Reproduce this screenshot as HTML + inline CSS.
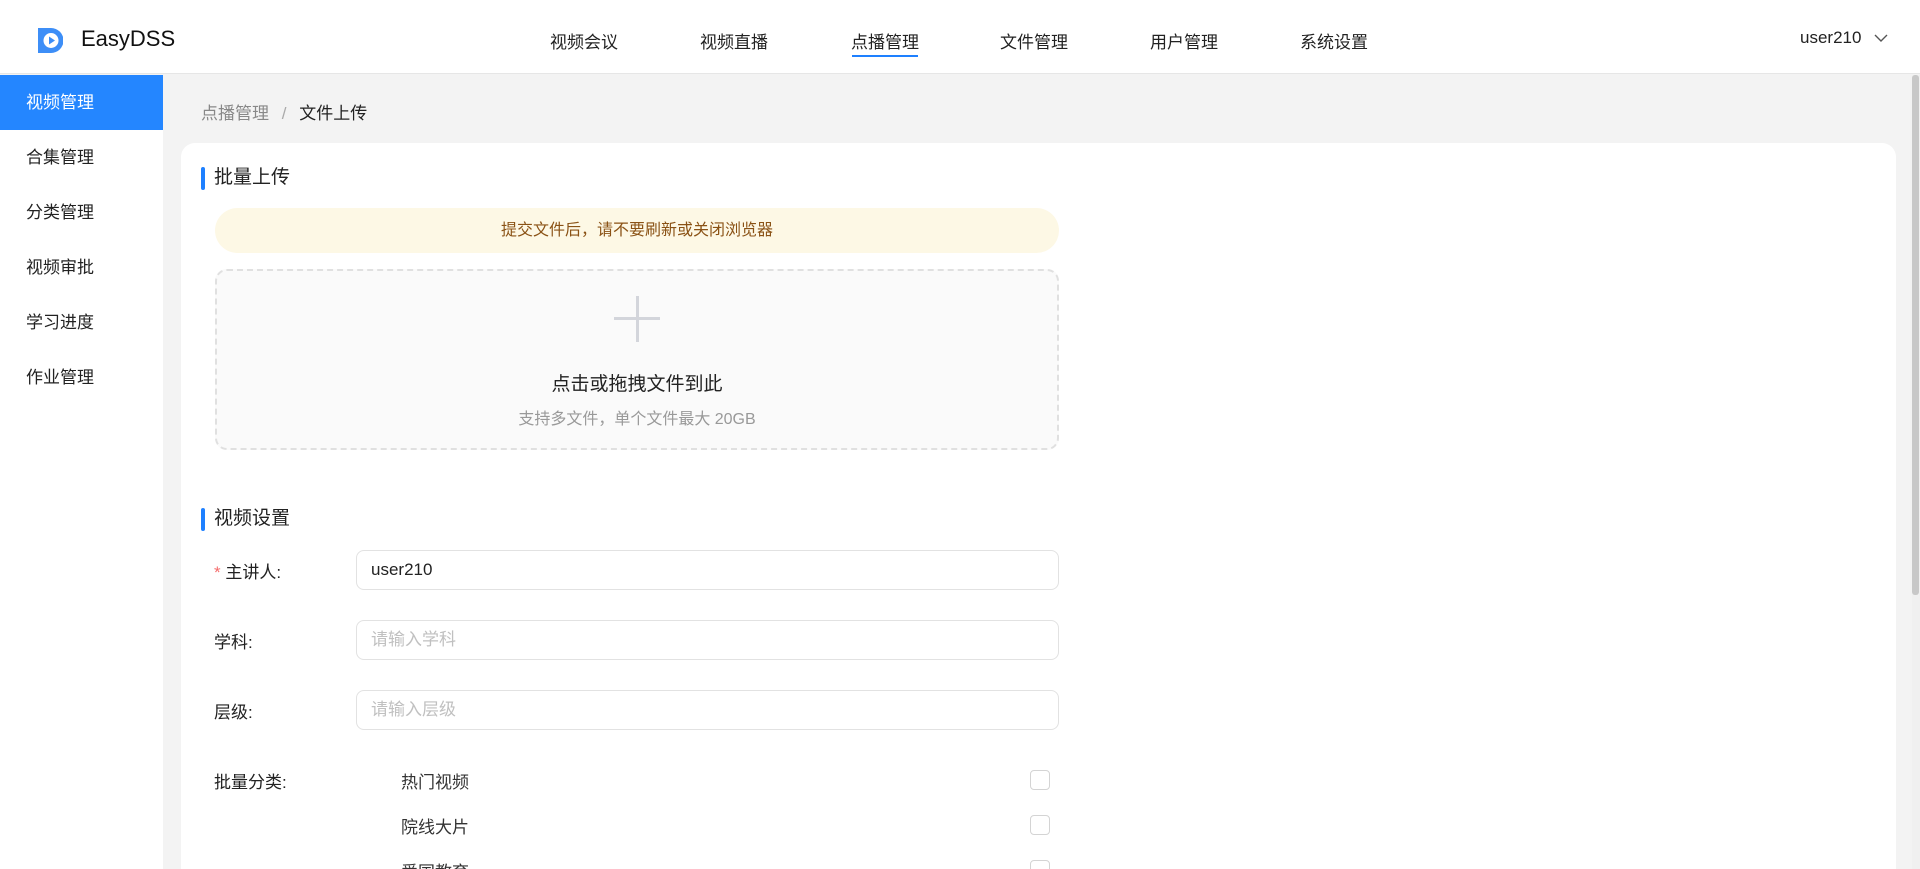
<!DOCTYPE html>
<html><head><meta charset="utf-8"><style>
*{margin:0;padding:0;box-sizing:border-box}
html{width:1920px;height:869px;overflow:hidden}
body{width:1920px;height:869px;overflow:hidden;background:#f3f3f3;font-family:"Liberation Sans","Noto Sans CJK SC",sans-serif;color:#222;position:relative}
.abs{position:absolute}
header{position:absolute;left:0;top:0;width:1920px;height:74px;background:#fff;border-bottom:1px solid #e6e6e6}
.nav{position:absolute;top:28px;font-size:17px;color:#222;white-space:nowrap}
.side{position:absolute;left:0;top:75px;width:163px;height:794px;background:#fff}
.si{position:absolute;left:0;width:163px;height:55px;line-height:55px;padding-left:26px;font-size:17px;color:#222}
.card{position:absolute;left:181px;top:143px;width:1715px;height:726px;background:#fff;border-radius:14px 14px 0 0}
.ttl{position:absolute;font-size:19px;color:#222;padding-left:13px;line-height:24px}
.ttl:before{content:"";position:absolute;left:0;top:1px;width:4px;height:23px;background:#1e80ff;border-radius:2px}
.inp{position:absolute;left:356px;width:703px;height:40px;border:1px solid #e2e2e2;border-radius:8px;font-size:17px;line-height:38px;padding-left:14px}
.lbl{position:absolute;left:214px;font-size:17px;color:#222}
.cb{position:absolute;left:1030px;width:20px;height:20px;border:1px solid #d4d4d4;border-radius:4px;background:#fff}
.cat{position:absolute;left:401px;font-size:17px;color:#333}
</style></head><body>
<header>
<svg class="abs" style="left:38px;top:28px" width="25" height="25" viewBox="0 0 25 25"><path d="M0 0 H13 A12 12 0 0 1 13 25 H0Z" fill="#3d8ef7"/><circle cx="13" cy="12.5" r="7.5" fill="#fff"/><path d="M11 8.5 L17 12.5 L11 16.5Z" fill="#3d8ef7"/></svg>
<div class="abs" style="left:81px;top:26px;font-size:22px;color:#111">EasyDSS</div>
<div class="nav" style="left:550px">视频会议</div>
<div class="nav" style="left:700px">视频直播</div>
<div class="nav" style="left:851px">点播管理</div>
<div class="abs" style="left:852px;top:55px;width:66px;height:2px;background:#1e80ff"></div>
<div class="nav" style="left:1000px">文件管理</div>
<div class="nav" style="left:1150px">用户管理</div>
<div class="nav" style="left:1300px">系统设置</div>
<div class="nav" style="left:1800px;color:#222">user210</div>
<svg class="abs" style="left:1874px;top:34px" width="14" height="9" viewBox="0 0 14 9"><path d="M1 1 L7 7 L13 1" fill="none" stroke="#555" stroke-width="1.4"/></svg>
</header>
<div class="side">
<div class="si" style="top:0;background:#2486ff;color:#fff">视频管理</div>
<div class="si" style="top:55px">合集管理</div>
<div class="si" style="top:110px">分类管理</div>
<div class="si" style="top:165px">视频审批</div>
<div class="si" style="top:220px">学习进度</div>
<div class="si" style="top:275px">作业管理</div>
</div>
<div class="abs" style="left:1912px;top:75px;width:8px;height:794px;background:#f0f0f0"><div style="width:7px;height:520px;background:#c8c8c8;border-radius:3px"></div></div>
<div class="abs" style="left:201px;top:99px;font-size:17px;color:#888">点播管理 <span style="color:#aaa;margin:0 8px">/</span> <span style="color:#222">文件上传</span></div>
<div class="card"></div>
<div class="ttl" style="left:201px;top:166px">批量上传</div>
<div class="abs" style="left:215px;top:208px;width:844px;height:45px;border-radius:23px;background:#fdf8e5;color:#8a5215;font-size:16px;text-align:center;line-height:45px">提交文件后，请不要刷新或关闭浏览器</div>
<div class="abs" style="left:215px;top:269px;width:844px;height:181px;border:2px dashed #e0e0e0;border-radius:12px;background:#fafafa"></div>
<div class="abs" style="left:614px;top:317px;width:46px;height:2.5px;background:#d3d5db"></div>
<div class="abs" style="left:636px;top:296px;width:2.5px;height:46px;background:#d3d5db"></div>
<div class="abs" style="left:215px;top:369px;width:844px;text-align:center;font-size:19px;color:#222">点击或拖拽文件到此</div>
<div class="abs" style="left:215px;top:405px;width:844px;text-align:center;font-size:16px;color:#999">支持多文件，单个文件最大 20GB</div>
<div class="ttl" style="left:201px;top:507px">视频设置</div>
<div class="lbl" style="top:558px"><span style="color:#f56c6c">*</span> 主讲人:</div>
<div class="inp" style="top:550px;color:#222">user210</div>
<div class="lbl" style="top:628px">学科:</div>
<div class="inp" style="top:620px;color:#c0c0c0">请输入学科</div>
<div class="lbl" style="top:698px">层级:</div>
<div class="inp" style="top:690px;color:#c0c0c0">请输入层级</div>
<div class="lbl" style="top:768px">批量分类:</div>
<div class="cat" style="top:768px">热门视频</div><div class="cb" style="top:770px"></div>
<div class="cat" style="top:813px">院线大片</div><div class="cb" style="top:815px"></div>
<div class="cat" style="top:858px">爱国教育</div><div class="cb" style="top:860px"></div>
</body></html>
